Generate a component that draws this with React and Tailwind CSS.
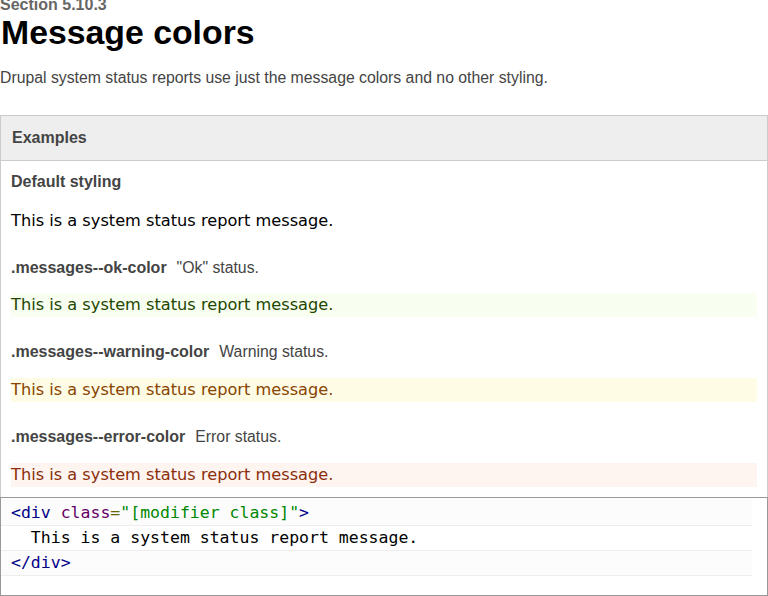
const SANS = 'font-["Liberation_Sans",Arial,sans-serif]'
const VERDANA = 'font-["DejaVu_Sans",Verdana,sans-serif]'

const MODIFIERS = [
  { name: '.messages--ok-color', desc: '"Ok" status.', box: 'bg-[#f8fff0] text-[#234600]' },
  { name: '.messages--warning-color', desc: 'Warning status.', box: 'bg-[#fffce5] text-[#884400]' },
  { name: '.messages--error-color', desc: 'Error status.', box: 'bg-[#fef5f1] text-[#8c2e0b]' },
]

function Message({ className = '' }) {
  return (
    <div className={`${VERDANA} text-[16.2px] leading-[24px] ${className}`}>
      This is a system status report message.
    </div>
  )
}

export default function App() {
  return (
    <div className={`${SANS} bg-white w-[768px] h-[596px] overflow-hidden`}>
      {/* header */}
      <div className="text-[16px] font-bold text-[#666] leading-[16px] -mt-[3px]">Section 5.10.3</div>
      <h1 className="text-[33.8px] font-bold text-black leading-[38px] pl-[1px]">Message colors</h1>
      <p className="text-[15.8px] text-[#444] mt-[17px] leading-[20px]">
        Drupal system status reports use just the message colors and no other styling.
      </p>

      {/* examples */}
      <div className="mt-[27px] border border-[#ccc] border-b-0">
        <div className="bg-[#eee] border-b border-[#ccc] h-[45px] flex items-center px-[11px]">
          <span className="text-[16px] font-bold text-[#444]">Examples</span>
        </div>
        <div className="px-[10px] pt-[11px] pb-[10px]">
          <div className="text-[16px] font-bold text-[#444] leading-[20px]">Default styling</div>
          <Message className="mt-[17px] text-black" />

          {MODIFIERS.map((m, i) => (
            <div key={m.name}>
              <div className="mt-[25px] leading-[20px] text-[#444]">
                <span className="text-[16px] font-bold">{m.name}</span>
                <span className="text-[15.8px] ml-[10px]">{m.desc}</span>
              </div>
              <Message className={`${i === 0 ? 'mt-[15px]' : 'mt-[16px]'} ${m.box}`} />
            </div>
          ))}
        </div>
      </div>

      {/* code */}
      <div className="border border-[#999] h-[99px] pt-[1px]">
        <ol className="font-['DejaVu_Sans_Mono',monospace] text-[16.5px] leading-[24px] mr-[15px] list-none">
          <li className="bg-[#fcfcfc] border-b border-[#eee] pl-[10px] pt-[2px]">
            <span className="text-[#000088]">&lt;div</span>{' '}
            <span className="text-[#660066]">class</span>
            <span className="text-[#666600]">=</span>
            <span className="text-[#008800]">"[modifier class]"</span>
            <span className="text-[#000088]">&gt;</span>
          </li>
          <li className="border-b border-[#eee] pl-[10px] text-black whitespace-pre">{'  This is a system status report message.'}</li>
          <li className="bg-[#fcfcfc] border-b border-[#eee] pl-[10px]">
            <span className="text-[#000088]">&lt;/div&gt;</span>
          </li>
        </ol>
      </div>
    </div>
  )
}
